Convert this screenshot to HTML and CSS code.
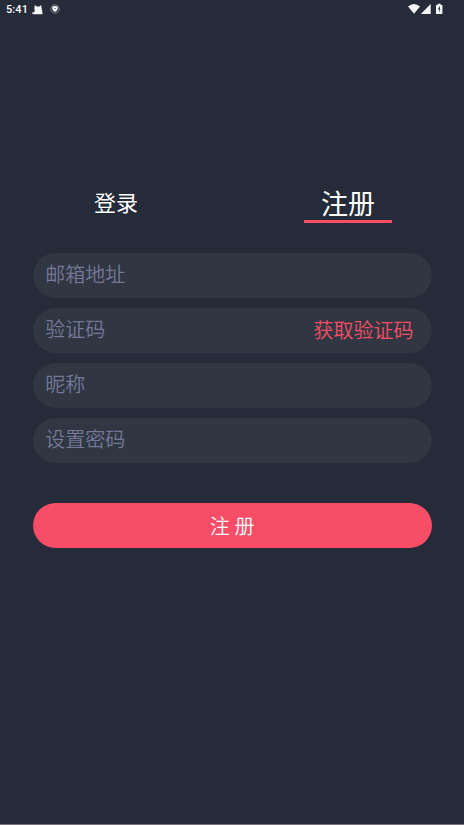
FILE: index.html
```html
<!DOCTYPE html>
<html lang="zh-CN">
<head>
<meta charset="utf-8">
<title>注册</title>
<link rel="stylesheet" href="styles.css">
</head>
<body>
<div class="screen">
  <header class="status">
    <span class="time">5:41</span>
    <svg class="cat" width="12" height="10" viewBox="0 0 12 10"><path d="M2.8 0 L4.8 1.4 H7.4 L9.2 0 L9.7 3.8 L10.2 6 L10.6 9.2 H1.4 L0 8.2 L.4 7.2 L2 7.6 L2.8 5.2 L2.3 3.6Z"/></svg>
    <svg class="shield" width="10" height="10" viewBox="0 0 10 10"><circle cx="5" cy="5" r="4.2"/><path d="M5 2 L7.7 2.6 V4.8 Q7.4 7 5 8 Q2.6 7 2.3 4.8 V2.6Z"/><circle class="dot" cx="5" cy="4.6" r=".6"/></svg>
    <svg class="system" width="36" height="12" viewBox="0 0 36 12"><path d="M0 3.4 Q6 -1.6 12 3.4 L6 10.8Z M12.8 11 L22.7 1 V11Z M28 2 H29.7 V.7 H32.7 V2 H34.4 V11 H28Z"/><path class="bolt" d="M31.9 3 L29.7 6.2 H31.2 V9.4 L32.4 6 H31.9Z"/></svg>
  </header>
  <nav class="tabs">
    <a class="tab">登录</a>
    <a class="tab active">注册</a>
  </nav>
  <form class="form">
    <div class="field"><span>邮箱地址</span></div>
    <div class="field"><span>验证码</span><a class="code">获取验证码</a></div>
    <div class="field"><span>昵称</span></div>
    <div class="field"><span>设置密码</span></div>
    <button class="submit" type="button">注 册</button>
  </form>
</div>
</body>
</html>
```
FILE: styles.css
```css
* { box-sizing: border-box; }
body { margin: 0; background: #252b39; }
.screen {
  height: 825px;
  display: flex;
  flex-direction: column;
  background: #252b39;
  border-bottom: 1px solid #77737c;
  color: #fff;
  font-family: "Roboto", "Noto Sans CJK SC", sans-serif;
  overflow: hidden;
}
.status {
  height: 20px;
  display: flex;
  align-items: flex-start;
  padding: 4px 20px 0 6px;
}
.time { width: 26px; font-size: 11px; line-height: 12px; font-weight: 500; letter-spacing: .1px; }
.status svg { fill: #f4f5f6; flex: none; }
.cat { margin-top: 1px; }
.shield { margin: 0 0 0 6px; }
.shield circle { fill: none; stroke: #858991; stroke-width: .9; }
.shield .dot { fill: #252b39; stroke: none; }
.status .system { margin-left: auto; margin-top: -1px; }
.status .bolt { fill: #252b39; }
.tabs {
  display: grid;
  grid-template-columns: 1fr 1fr;
  height: 43px;
  margin-top: 160px;
}
.tab { text-align: center; font-size: 22px; line-height: 48px; }
.active {
  justify-self: center;
  width: 88.5px;
  font-size: 27px;
  line-height: 50px;
  border-bottom: 3px solid #f84d66;
  height: 43px;
}
.form {
  display: flex;
  flex-direction: column;
  gap: 10.3px;
  margin: 30px 32.4px 0 32.6px;
}
.field {
  display: flex;
  justify-content: space-between;
  height: 44.7px;
  padding: 0 18px 0 12.6px;
  border-radius: 23px;
  background: #303642;
  color: #757997;
  font-size: 20px;
  line-height: 44px;
  font-weight: 350;
}
.code { color: #f84d66; line-height: 47px; }
.submit {
  height: 44.7px;
  margin-top: 30px;
  padding: 2px 0 0;
  border: 0;
  border-radius: 23px;
  background: #f84d66;
  color: #fff;
  font: 350 20px/44px "Roboto", "Noto Sans CJK SC", sans-serif;
}
```
